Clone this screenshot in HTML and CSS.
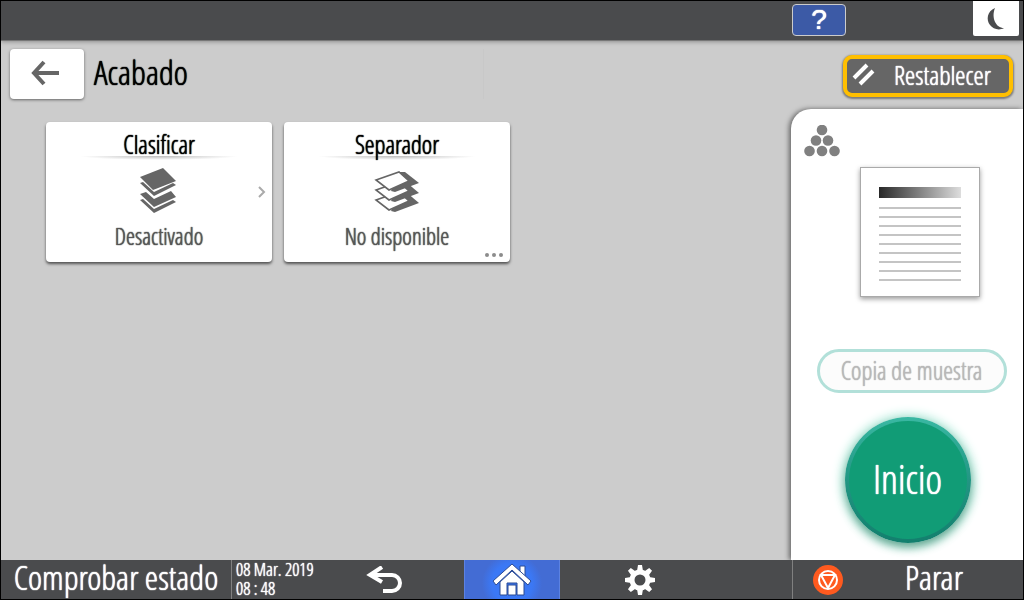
FILE: index.html
```html
<!DOCTYPE html>
<html lang="es">
<head>
    <meta charset="utf-8">
    <title>Acabado</title>
    <link rel="stylesheet" href="styles.css">
</head>
<body>
    <header class="topbar">
        <button class="help" aria-label="Ayuda">?</button>
        <button class="sleep" aria-label="Reposo">
            <svg width="20" height="24" viewBox="0 0 20 24"><path d="M9 1C1 4 0 13 4 18c3 4 9 6 14 3C10 21 5 11 9 1z" fill="#4a4b4d"/></svg>
        </button>
    </header>

    <main class="main">
        <section class="content">
            <div class="heading">
                <button class="back" aria-label="Volver">
                    <svg width="30" height="26" viewBox="0 0 30 26"><path d="M14 2L4 13l10 11M4 13h25" fill="none" stroke="#666" stroke-width="4"/></svg>
                </button>
                <h1>Acabado</h1>
            </div>
            <div class="cards">
                <button class="card">
                    <span class="card-title">Clasificar</span>
                    <svg class="card-icon" width="46" height="48" viewBox="0 0 46 48" fill="#666">
                        <path d="M27 1L40 14 17 23 4 10z"/>
                        <path d="M4 16l3-1 11 10 19-9 3 2-22 11z"/>
                        <path d="M4 27l6-2 8 7 17-8 5 6-22 10z"/>
                        <path d="M4 33l3-1 11 10 19-9 3 2-22 11z"/>
                    </svg>
                    <span class="card-value">Desactivado</span>
                    <svg class="chevron" width="8" height="12" viewBox="0 0 8 12"><path d="M1 1l5 5-5 5" fill="none" stroke="#aaa" stroke-width="2"/></svg>
                </button>
                <button class="card">
                    <span class="card-title">Separador</span>
                    <svg class="card-icon" width="46" height="48" viewBox="0 0 46 48" stroke-width="1.6" stroke="#666" fill="#fff">
                        <path d="M27 25l5 0 13 11-24 9-4-1z" fill="#666" stroke="none"/>
                        <path d="M2 33l23-8 10 9-20 9z"/>
                        <path d="M27 15l5 0 13 11-24 9-4-1z" fill="#666" stroke="none"/>
                        <path d="M2 23l23-8 10 9-20 9z"/>
                        <path d="M25 5l6 0 14 11-24 9-4-1z" fill="#666" stroke="none"/>
                        <path d="M2 13l23-8 10 9-20 9z"/>
                    </svg>
                    <span class="card-value">No disponible</span>
                    <svg class="dots" width="18" height="4" viewBox="0 0 18 4" fill="#8c8c8c"><circle cx="2" cy="2" r="2"/><circle cx="9" cy="2" r="2"/><circle cx="16" cy="2" r="2"/></svg>
                </button>
            </div>
        </section>

        <aside class="side">
            <button class="reset">
                <svg width="24" height="24" viewBox="0 0 24 24"><path d="M2 15L15 2M8 21L21 8" stroke="#fff" stroke-width="4"/></svg>
                <span>Restablecer</span>
            </button>
            <div class="panel">
                <svg class="color-mode" width="36" height="32" viewBox="0 0 36 32" fill="#808080">
                    <circle cx="18" cy="5" r="5.3"/>
                    <circle cx="12" cy="15.5" r="5.3"/><circle cx="24" cy="15.5" r="5.3"/>
                    <circle cx="5.5" cy="26" r="5.3"/><circle cx="18" cy="26" r="5.3"/><circle cx="30.5" cy="26" r="5.3"/>
                </svg>
                <div class="page">
                    <div class="page-title"></div>
                    <div class="page-lines"></div>
                </div>
                <button class="sample" disabled>Copia de muestra</button>
                <button class="start">Inicio</button>
            </div>
        </aside>
    </main>

    <footer class="bottombar">
        <div class="left">
            <button class="status">Comprobar estado</button>
            <div class="date">08 Mar. 2019<br>08 : 48</div>
        </div>
        <nav class="nav">
            <button aria-label="Atrás">
                <svg width="38" height="28" viewBox="0 0 38 28"><path d="M8 9h19a8 8 0 0 1 0 16h-9" fill="none" stroke="#fff" stroke-width="4"/><path d="M17 1L5 9l12 7" fill="none" stroke="#fff" stroke-width="4"/></svg>
            </button>
            <button class="home" aria-label="Inicio">
                <svg width="40" height="34" viewBox="0 0 40 34" fill="#fff" stroke="#2b4a94" stroke-width="1">
                    <path d="M28 3h5v12l-5-5z"/>
                    <path d="M8 19L20 8l12 11v13h-7V20H15v12H8z"/>
                    <path d="M16 22h8v10h-8z"/>
                    <path d="M20 1L1 18l3 4L20 7l16 15 3-4z"/>
                </svg>
            </button>
            <button aria-label="Ajustes">
                <svg width="30" height="30" viewBox="-15 -15 30 30" fill="#fff">
                    <circle r="8" fill="none" stroke="#fff" stroke-width="5"/>
                    <path id="tooth" d="M-3-9l1-6h4l1 6zM-3 9l1 6h4l1-6z"/>
                    <use href="#tooth" transform="rotate(45)"/>
                    <use href="#tooth" transform="rotate(90)"/>
                    <use href="#tooth" transform="rotate(135)"/>
                </svg>
            </button>
        </nav>
        <div class="right">
            <button class="stop">
                <svg width="30" height="30" viewBox="0 0 30 30" fill="none" stroke="#fff" stroke-width="2"><circle cx="15" cy="15" r="15" fill="#ff5a1f" stroke="none"/><circle cx="15" cy="15" r="9"/><path d="M8 10h14l-7 13z"/></svg>
                <span>Parar</span>
            </button>
        </div>
    </footer>
</body>
</html>
```

FILE: styles.css
```css
* {
    box-sizing: border-box;
}
body {
    display: flex;
    flex-direction: column;
    min-height: 100vh;
    margin: 0;
    border: 1px solid #000;
    background: #ccc;
    font-family: "Open Sans Condensed Light", "Roboto Condensed", "Open Sans", sans-serif;
    text-shadow: 0 0 1px currentColor, 0 0 1px currentColor;
}
button {
    margin: 0;
    padding: 0;
    border: 0;
    background: none;
    font: inherit;
    text-shadow: inherit;
    white-space: nowrap;
    cursor: pointer;
}
svg {
    display: block;
}

/* top bar */
.topbar {
    display: flex;
    justify-content: flex-end;
    height: 40px;
    padding-right: 4px;
    border-bottom: 1px solid #777;
    background: #4a4b4d;
    box-shadow: 0 1px 4px rgba(0,0,0,0.3);
}
.help {
    width: 54px;
    height: 32px;
    margin: 3px 127px 0 0;
    border: 1px solid #ccc;
    border-radius: 4px;
    background: #3c5aa6;
    color: #fff;
    font-family: "Liberation Sans", sans-serif;
    font-size: 28px;
    line-height: 30px;
}
.sleep {
    display: flex;
    align-items: center;
    justify-content: center;
    width: 46px;
    height: 35px;
    border-radius: 0 0 2px 2px;
    background: #fff;
}

/* main area */
.main {
    display: flex;
    flex: 1;
}
.content {
    flex: 1;
    padding: 8px 9px;
}
.heading {
    display: flex;
    align-items: center;
    gap: 10px;
    width: 474px;
    height: 50px;
    border-right: 1px solid #c8c8c8;
}
.back {
    display: flex;
    align-items: center;
    justify-content: center;
    width: 74px;
    height: 50px;
    padding: 0 4px 2px 0;
    border-radius: 4px;
    background: #fff;
    box-shadow: 0 1px 3px rgba(0,0,0,0.5);
}
h1 {
    margin: 0;
    padding-bottom: 4px;
    font-size: 34px;
    font-weight: normal;
    line-height: 40px;
}
.cards {
    display: flex;
    flex-wrap: wrap;
    gap: 12px;
    padding: 23px 36px;
}
.card {
    position: relative;
    display: flex;
    flex-direction: column;
    align-items: center;
    width: 226px;
    height: 140px;
    padding-top: 8px;
    border-radius: 4px;
    background: #fff;
    box-shadow: 0 2px 3px rgba(0,0,0,0.6);
    line-height: 28px;
}
.card-title {
    width: 160px;
    color: #000;
    font-size: 25px;
}
.card-title::after {
    content: "";
    display: block;
    height: 4px;
    margin-top: -2px;
    background: radial-gradient(ellipse at top, #bbb, transparent 70%);
}
.card-icon {
    margin: 7px 0;
}
.card-value {
    color: #555;
    font-size: 23px;
}
.chevron {
    position: absolute;
    top: 64px;
    right: 6px;
}
.dots {
    position: absolute;
    right: 7px;
    bottom: 5px;
}

/* right side */
.side {
    display: flex;
    flex-direction: column;
    width: 232px;
}
.reset {
    display: flex;
    align-items: center;
    align-self: flex-end;
    width: 170px;
    height: 42px;
    margin: 14px 10px 12px 0;
    padding: 0 0 2px 5px;
    border: 4px solid #ffbf00;
    border-radius: 9px;
    background: #666;
    box-shadow: 0 1px 2px 1px rgba(0,0,0,0.4);
    color: #fff;
    font-size: 26px;
    line-height: 32px;
}
.reset span {
    flex: 1;
    text-align: center;
}
.panel {
    display: flex;
    flex: 1;
    flex-direction: column;
    align-items: center;
    padding: 16px 13px;
    border-top-left-radius: 20px;
    background: #fff;
    box-shadow: -2px 0 5px rgba(0,0,0,0.5);
}
.color-mode {
    align-self: flex-start;
}
.page {
    width: 120px;
    height: 130px;
    margin: 10px 0 52px 25px;
    padding: 19px 18px;
    border: 1px solid #aaa;
    box-shadow: 0 2px 5px rgba(0,0,0,0.4);
}
.page-title {
    height: 11px;
    margin-bottom: 9px;
    background: linear-gradient(to right, #282828, #ddd);
}
.page-lines {
    height: 74px;
    background: repeating-linear-gradient(#c4c4c4 0 2px, transparent 2px 9px);
}
.sample {
    width: 190px;
    height: 44px;
    margin-left: 9px;
    padding-bottom: 2px;
    border: 3px solid #b2e0d9;
    border-radius: 22px;
    background: #fcfcfc;
    color: #b8b8b8;
    font-size: 25px;
    line-height: 34px;
}
.start {
    width: 126px;
    height: 126px;
    margin: 24px 0 0 1px;
    padding-bottom: 4px;
    border: 4px solid transparent;
    border-radius: 50%;
    background: linear-gradient(#119c76, #119c76) padding-box, linear-gradient(#3ab8a3, #229683, #127f6d) border-box;
    box-shadow: 0 4px 8px rgba(0,90,60,0.5), 0 1px 10px 5px #c4f2e6;
    color: #fff;
    font-size: 40px;
}

/* bottom bar */
.bottombar {
    position: relative;
    display: flex;
    height: 39px;
    background: #4a4b4d;
    color: #fff;
}
.bottombar button {
    color: #fff;
}
.left,
.right {
    display: flex;
    flex: 1;
}
.right {
    justify-content: flex-end;
}
.status {
    width: 231px;
    padding-bottom: 5px;
    border-right: 1px solid #808080;
    font-size: 34px;
    line-height: 34px;
}
.date {
    padding-left: 4px;
    font-size: 18px;
    line-height: 19px;
    white-space: nowrap;
}
.nav {
    display: flex;
    gap: 32px;
}
.nav button {
    display: flex;
    align-items: center;
    justify-content: center;
    width: 96px;
}
.nav .home {
    border: solid #5c82e2;
    border-width: 0 1px;
    background: radial-gradient(circle at 50% 60%, #3b78f5 20px, #436cd4 30px);
}
.stop {
    display: flex;
    align-items: center;
    width: 231px;
    padding-left: 20px;
    border-left: 1px solid #808080;
    font-size: 34px;
    line-height: 34px;
}
.stop span {
    flex: 1;
    padding: 0 0 5px 2px;
}
```
